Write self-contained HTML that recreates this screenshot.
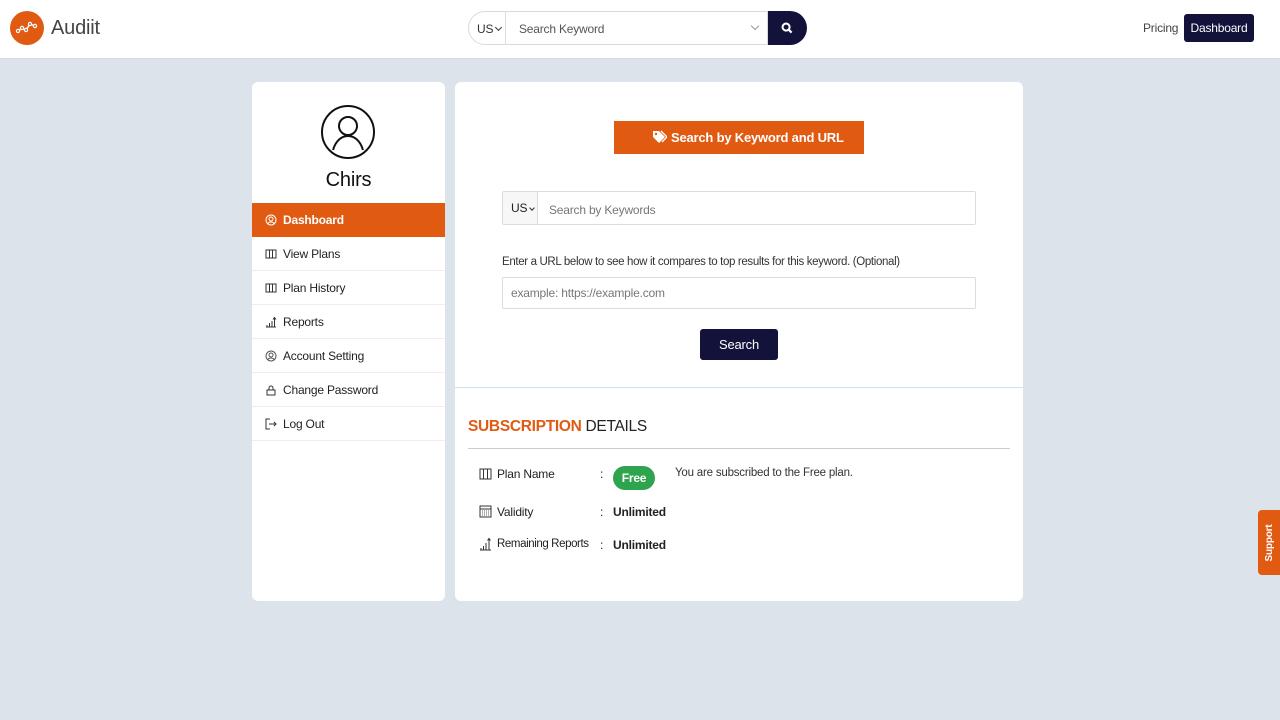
<!DOCTYPE html>
<html><head><meta charset="utf-8"><style>
*{box-sizing:border-box;margin:0;padding:0}
body{width:1280px;height:720px;background:#dde3ea;font-family:"Liberation Sans",sans-serif;color:#222;position:relative;overflow:hidden;font-size:12px;letter-spacing:-0.2px}
.hdr{position:absolute;left:0;top:0;width:1280px;height:59px;background:#fff;border-bottom:1px solid #d5dbe3}
.abs{position:absolute}
.card{position:absolute;background:#fff;border-radius:6px}
.menu div{height:34px;border-bottom:1px solid #f3ece8;display:flex;align-items:center;padding-left:13px;font-size:12px;color:#222}
.menu div svg{margin-right:6px}
.menu .act{background:#e15a12;color:#fff;font-weight:bold;border-bottom:none}
.chev{display:inline-block;width:5px;height:5px;border-right:1.5px solid #333;border-bottom:1.5px solid #333;transform:rotate(45deg);margin-left:3px;position:relative;top:-3px}
</style></head><body>
<div class="hdr">
  <div class="abs" style="left:10px;top:11px;width:34px;height:34px;border-radius:50%;background:#e15a12"></div>
  <svg class="abs" style="left:10px;top:11px" width="34" height="34" viewBox="0 0 34 34"><polyline points="8,20 12,17 16,19 20,13 25,15" fill="none" stroke="#fff" stroke-width="1.5"/><g fill="#e15a12" stroke="#fff" stroke-width="1.2"><circle cx="8" cy="20" r="1.6"/><circle cx="12" cy="17" r="1.6"/><circle cx="16" cy="19" r="1.6"/><circle cx="20" cy="13" r="1.6"/><circle cx="25" cy="15" r="1.6"/></g></svg>
  <div class="abs" style="left:51px;top:17px;font-size:20px;color:#444">Audiit</div>
  <div class="abs" style="left:468px;top:11px;width:300px;height:34px;border:1px solid #d6dbe0;border-radius:17px 0 0 17px;background:#fff"></div>
  <div class="abs" style="left:505px;top:12px;width:1px;height:32px;background:#ddd"></div>
  <div class="abs" style="left:477px;top:22px;font-size:12px;color:#333">US<span class="chev"></span></div>
  <div class="abs" style="left:519px;top:22px;font-size:12px;color:#555">Search Keyword</div>
  <div class="abs" style="left:752px;top:23px;width:6px;height:6px;border-right:1.5px solid #999;border-bottom:1.5px solid #999;transform:rotate(45deg)"></div>
  <div class="abs" style="left:768px;top:11px;width:39px;height:34px;background:#12123a;border-radius:0 17px 17px 0"></div>
  <svg class="abs" style="left:781px;top:22px" width="12" height="12" viewBox="0 0 13 13"><circle cx="5.5" cy="5.5" r="3.8" fill="none" stroke="#fff" stroke-width="2.2"/><line x1="8.3" y1="8.3" x2="11.5" y2="11.5" stroke="#fff" stroke-width="2.4"/></svg>
  <div class="abs" style="left:1143px;top:21px;font-size:12px;color:#444">Pricing</div>
  <div class="abs" style="left:1184px;top:14px;width:70px;height:28px;background:#12123a;border-radius:3px;color:#fff;font-size:12px;text-align:center;line-height:28px">Dashboard</div>
</div>

<div class="card" style="left:252px;top:82px;width:193px;height:519px">
  <svg class="abs" style="left:68px;top:22px" width="56" height="56" viewBox="0 0 56 56"><circle cx="28" cy="28" r="26" fill="none" stroke="#111" stroke-width="2"/><circle cx="28" cy="22" r="9" fill="none" stroke="#111" stroke-width="2"/><path d="M13 46 C16 36 22 32 28 32 C34 32 40 36 43 46" fill="none" stroke="#111" stroke-width="2"/></svg>
  <div class="abs" style="left:0;top:87px;width:193px;text-align:center;font-size:20px;color:#111">Chirs</div>
  <div class="menu abs" style="left:0;top:121px;width:193px">
    <div class="act"><svg width="12" height="12" viewBox="0 0 12 12"><circle cx="6" cy="6" r="5" fill="none" stroke="#fff"/><circle cx="6" cy="5" r="2" fill="none" stroke="#fff"/><path d="M3 9.5C4 7.5 8 7.5 9 9.5" fill="none" stroke="#fff"/></svg>Dashboard</div>
    <div><svg width="12" height="12" viewBox="0 0 12 12"><rect x="1" y="2" width="10" height="8" fill="none" stroke="#333"/><line x1="4.5" y1="2" x2="4.5" y2="10" stroke="#333"/><line x1="7.5" y1="2" x2="7.5" y2="10" stroke="#333"/></svg>View Plans</div>
    <div><svg width="12" height="12" viewBox="0 0 12 12"><rect x="1" y="2" width="10" height="8" fill="none" stroke="#333"/><line x1="4.5" y1="2" x2="4.5" y2="10" stroke="#333"/><line x1="7.5" y1="2" x2="7.5" y2="10" stroke="#333"/></svg>Plan History</div>
    <div><svg width="12" height="12" viewBox="0 0 12 12"><path d="M1 11h10M2 11V9M4.5 11V7M7 11V5M9.5 11V2M8 3.5l1.5-2 1.5 2" fill="none" stroke="#333"/></svg>Reports</div>
    <div><svg width="12" height="12" viewBox="0 0 12 12"><circle cx="6" cy="6" r="5" fill="none" stroke="#555"/><circle cx="6" cy="5" r="2" fill="none" stroke="#555"/><path d="M3 9.5C4 7.5 8 7.5 9 9.5" fill="none" stroke="#555"/></svg>Account Setting</div>
    <div><svg width="12" height="12" viewBox="0 0 12 12"><rect x="2" y="6" width="8" height="5" fill="none" stroke="#333"/><path d="M4 6V4a2 2 0 0 1 4 0v2" fill="none" stroke="#333"/></svg>Change Password</div>
    <div><svg width="12" height="12" viewBox="0 0 12 12"><path d="M5 1H1v10h4M4 6h7M9 4l2 2-2 2" fill="none" stroke="#333"/></svg>Log Out</div>
  </div>
</div>

<div class="card" style="left:455px;top:82px;width:568px;height:519px">
  <div class="abs" style="left:159px;top:39px;width:250px;height:33px;background:#e15a12;color:#fff;font-weight:bold;font-size:13px;line-height:33px;padding-left:38px"><svg style="position:relative;top:2px;margin-right:4px" width="15" height="14" viewBox="0 0 15 14"><path d="M1 1h6l6 6-6 6-6-6z" fill="#fff"/><circle cx="4" cy="4" r="1.2" fill="#e15a12"/><path d="M9 1l6 6-5 5" fill="none" stroke="#fff" stroke-width="1.3"/></svg>Search by Keyword and URL</div>
  <div class="abs" style="left:47px;top:109px;width:474px;height:34px;border:1px solid #d8dde2;border-radius:2px"></div>
  <div class="abs" style="left:48px;top:110px;width:35px;height:32px;background:#f7f7f7;border-right:1px solid #ddd;font-size:12px;line-height:32px;padding-left:8px">US<span class="chev" style="width:4px;height:4px;top:-2px"></span></div>
  <div class="abs" style="left:94px;top:121px;font-size:12px;color:#777">Search by Keywords</div>
  <div class="abs" style="left:47px;top:174px;font-size:11.5px;color:#333;letter-spacing:-0.35px">Enter a URL below to see how it compares to top results for this keyword. (Optional)</div>
  <div class="abs" style="left:47px;top:195px;width:474px;height:32px;border:1px solid #d8dde2;border-radius:2px;padding-left:8px;line-height:30px;font-size:12px;color:#777">example: https://example.com</div>
  <div class="abs" style="left:245px;top:247px;width:78px;height:31px;background:#12123a;border-radius:3px;color:#fff;font-size:13px;text-align:center;line-height:31px">Search</div>
  <div class="abs" style="left:0;top:305px;width:568px;height:1px;background:#cfe0ec"></div>
  <div class="abs" style="left:13px;top:336px;font-size:15.5px;color:#222;letter-spacing:-0.3px"><span style="color:#e15a12;font-weight:bold">SUBSCRIPTION</span> DETAILS</div>
  <div class="abs" style="left:13px;top:366px;width:542px;height:1px;background:#ccc"></div>
  <svg class="abs" style="left:24px;top:386px" width="13" height="12" viewBox="0 0 13 12"><rect x="1" y="1" width="11" height="10" fill="none" stroke="#333"/><line x1="4.5" y1="1" x2="4.5" y2="11" stroke="#333"/><line x1="8.5" y1="1" x2="8.5" y2="11" stroke="#333"/></svg>
  <div class="abs" style="left:42px;top:385px;font-size:12px">Plan Name</div>
  <div class="abs" style="left:145px;top:385px;font-size:12px">:</div>
  <div class="abs" style="left:158px;top:384px;width:42px;height:24px;background:#2ea44f;border-radius:12px;color:#fff;font-weight:bold;font-size:12px;text-align:center;line-height:24px">Free</div>
  <div class="abs" style="left:220px;top:385px;font-size:11.5px;color:#333">You are subscribed to the Free plan.</div>
  <svg class="abs" style="left:24px;top:422px" width="13" height="14" viewBox="0 0 13 14"><rect x="1" y="2" width="11" height="11" fill="none" stroke="#333"/><line x1="1" y1="5" x2="12" y2="5" stroke="#333"/><path d="M3 7h7M3 9h7M3 11h7" stroke="#666" stroke-dasharray="1 1"/></svg>
  <div class="abs" style="left:42px;top:423px;font-size:12px">Validity</div>
  <div class="abs" style="left:145px;top:423px;font-size:12px">:</div>
  <div class="abs" style="left:158px;top:423px;font-size:12px;font-weight:bold">Unlimited</div>
  <svg class="abs" style="left:24px;top:455px" width="13" height="14" viewBox="0 0 13 14"><path d="M1 13h11M2 13v-2M4.5 13V9M7 13V6M10 13V2M8.5 3.5l1.5-2 1.5 2" fill="none" stroke="#333"/></svg>
  <div class="abs" style="left:42px;top:456px;font-size:11.5px;letter-spacing:-0.4px">Remaining Reports</div>
  <div class="abs" style="left:145px;top:456px;font-size:12px">:</div>
  <div class="abs" style="left:158px;top:456px;font-size:12px;font-weight:bold">Unlimited</div>
</div>

<div class="abs" style="left:1258px;top:510px;width:26px;height:65px;background:#e15a12;border-radius:4px 0 0 4px"></div>
<div class="abs" style="left:1240px;top:536px;width:60px;transform:rotate(-90deg);color:#fff;font-weight:bold;font-size:10px;text-align:center;line-height:14px">Support</div>
</body></html>
